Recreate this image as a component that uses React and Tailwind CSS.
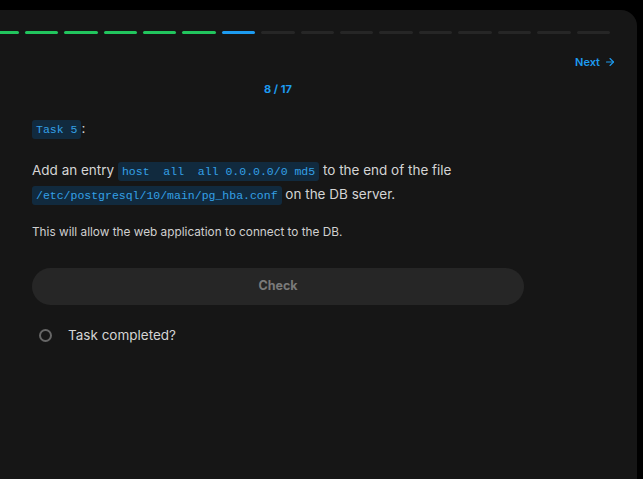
import { ArrowRight } from "lucide-react";

const TOTAL = 17;
const CURRENT = 8;

function Code({ children }) {
  return (
    <code className="rounded-[3px] bg-[#112a3e] px-[4px] py-[3px] font-['Liberation_Mono',monospace] text-[11.5px] text-[#34a0e6]">
      {children}
    </code>
  );
}

export default function App() {
  return (
    <div className="h-[479px] w-[643px] overflow-hidden bg-black pt-[10px] font-['Inter',sans-serif]">
      <div className="h-[469px] w-[637px] overflow-hidden rounded-tr-[16px] bg-[#161616]">
        {/* Progress */}
        <div className="ml-[-54px] mt-[21px] flex h-[3px] w-[664px] gap-[6px]">
          {Array.from({ length: TOTAL }).map((_, i) => (
            <div
              key={i}
              className={`h-full flex-1 rounded-full ${
                i < CURRENT - 1 ? "bg-[#22c55e]" : i === CURRENT - 1 ? "bg-[#1d9bf0]" : "bg-[#262626]"
              }`}
            />
          ))}
        </div>

        {/* Next */}
        <div className="mt-[20px] flex h-[16px] items-center justify-end pr-[21px]">
          <button className="flex items-center gap-[4px] text-[11px] font-semibold text-[#1d9bf0]">
            <span>Next</span>
            <ArrowRight size={12} strokeWidth={2.2} />
          </button>
        </div>

        <div className="ml-[32px] w-[492px]">
          <div className="mt-[11px] h-[16px] text-center text-[11px] font-bold leading-[16px] text-[#1d9bf0]">
            {CURRENT} / {TOTAL}
          </div>

          <p className="mt-[20px] text-[13.5px] leading-[22px] text-[#d4d4d4]">
            <Code>Task 5</Code>:
          </p>

          <p className="mt-[18px] text-[13.5px] leading-[22px] text-[#d4d4d4]">
            Add an entry <Code>host&nbsp;&nbsp;all&nbsp;&nbsp;all 0.0.0.0/0 md5</Code> to the end of the file{" "}
            <Code>/etc/postgresql/10/main/pg_hba.conf</Code> on the DB server.
          </p>

          <p className="mt-[16px] text-[11.8px] leading-[18px] text-[#d0d0d0]">
            This will allow the web application to connect to the DB.
          </p>

          <button className="mt-[27px] flex h-[37px] w-full items-center justify-center rounded-full bg-[#262626] text-[12.5px] font-bold text-[#7a7a7a]">
            Check
          </button>

          <div className="mt-[20px] flex h-[20px] items-center">
            <div className="ml-[7px] h-[13px] w-[13px] rounded-full border-[2.5px] border-[#666666]" />
            <span className="ml-[16px] text-[13.5px] text-[#d4d4d4]">Task completed?</span>
          </div>
        </div>
      </div>
    </div>
  );
}
